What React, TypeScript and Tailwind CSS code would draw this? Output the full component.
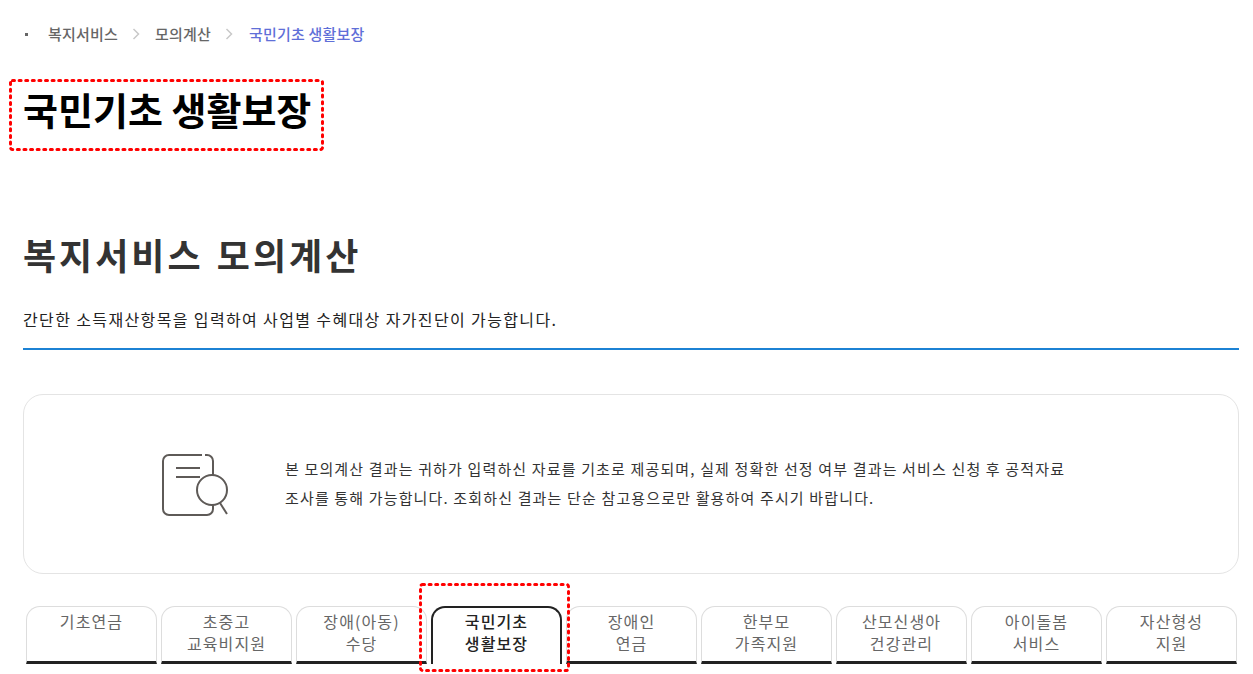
const font = "font-['Noto_Sans_CJK_KR','Noto_Sans',sans-serif]";

const tabs = [
  ["기초연금"],
  ["초중고", "교육비지원"],
  ["장애(아동)", "수당"],
  ["국민기초", "생활보장"],
  ["장애인", "연금"],
  ["한부모", "가족지원"],
  ["산모신생아", "건강관리"],
  ["아이돌봄", "서비스"],
  ["자산형성", "지원"],
];

function Chevron() {
  return (
    <svg width="9" height="12" viewBox="0 0 9 12" fill="none" className="shrink-0">
      <path d="M1.5 1l5 5-5 5" stroke="#c9c9c9" strokeWidth="1.5" />
    </svg>
  );
}

function SearchDocIcon() {
  return (
    <svg width="68" height="62" viewBox="0 0 68 62" fill="none" stroke="#5e5a57" strokeWidth="2" className="shrink-0 mt-[2px]">
      <path d="M40 1H7a6 6 0 0 0-6 6v48a6 6 0 0 0 6 6h38a6 6 0 0 0 6-6v-4" />
      <path d="M43 1h2a6 6 0 0 1 6 6v14" />
      <path d="M14 14h24M14 23h24" />
      <circle cx="50" cy="36" r="15" />
      <path d="M58 49l7 11" />
    </svg>
  );
}

// red dashed annotation drawn over the captured page
function DashedMark({ w, h, className }: { w: number; h: number; className: string }) {
  return (
    <svg width={w} height={h} className={`absolute pointer-events-none ${className}`} fill="none">
      <rect
        x="1.5"
        y="1.5"
        width={w - 3}
        height={h - 3}
        rx="2"
        stroke="#f00"
        strokeWidth="3"
        strokeLinecap="round"
        strokeDasharray="2 4.6"
      />
    </svg>
  );
}

export default function App() {
  return (
    <div className={`${font} w-[1253px] h-[674px] overflow-hidden bg-white pl-[23px] pr-[14px]`}>
      {/* breadcrumb */}
      <div className="flex items-center h-[20px] mt-[24px] text-[15px] font-medium tracking-[0.2px] text-[#666]">
        <span className="w-[3px] h-[3px] bg-[#666] mr-[20px] ml-[2px]" />
        <span>복지서비스</span>
        <span className="ml-[14px] mr-[14px]"><Chevron /></span>
        <span>모의계산</span>
        <span className="ml-[14px] mr-[15px]"><Chevron /></span>
        <span className="text-[#5f6fd8]">국민기초 생활보장</span>
      </div>

      {/* page title */}
      <div className="relative mt-[36px] h-[58px]">
        <h1 className="text-[38px] leading-[58px] font-bold text-black">국민기초 생활보장</h1>
        <DashedMark w={315} h={72} className="left-[-14px] top-[-1px]" />
      </div>

      <h2 className="mt-[88px] text-[36px] leading-[56px] font-bold tracking-[3px] [word-spacing:2px] text-[#333]">복지서비스 모의계산</h2>

      <p className="mt-[25px] text-[16px] leading-[24px] text-[#222] tracking-[1.37px]">
        간단한 소득재산항목을 입력하여 사업별 수혜대상 자가진단이 가능합니다.
      </p>
      <div className="mt-[17px] h-[2px] bg-[#1c82d4]" />

      {/* notice box */}
      <div className="mt-[44px] h-[180px] border border-[#e4e4e4] rounded-[20px] flex items-center pl-[138px]">
        <SearchDocIcon />
        <div className="ml-[55px] mb-[2px] w-[820px] text-[15px] leading-[29px] text-[#333] tracking-[1.15px]">
          <p>본 모의계산 결과는 귀하가 입력하신 자료를 기초로 제공되며, 실제 정확한 선정 여부 결과는 서비스 신청 후 공적자료</p>
          <p>조사를 통해 가능합니다. 조회하신 결과는 단순 참고용으로만 활용하여 주시기 바랍니다.</p>
        </div>
      </div>

      {/* tabs */}
      <div className="relative mt-[32px] ml-[3px] flex gap-[4px]">
        {tabs.map((lines, i) =>
          i === 3 ? (
            <div
              key={i}
              className="w-[131px] h-[58px] pt-[2px] border-2 border-b-0 border-[#222] rounded-t-[14px] text-center text-[16px] leading-[22px] font-medium tracking-[1.1px] text-[#222]"
            >
              {lines.map((l) => <div key={l}>{l}</div>)}
            </div>
          ) : (
            <div
              key={i}
              className="w-[131px] h-[58px] pt-[3px] border border-[#ddd] border-b-[3px] border-b-[#222] rounded-t-[14px] text-center text-[16px] leading-[22px] tracking-[1.1px] text-[#666]"
            >
              {lines.map((l) => <div key={l}>{l}</div>)}
            </div>
          )
        )}
        <DashedMark w={151} h={89} className="left-[393px] top-[-23px]" />
      </div>
    </div>
  );
}
